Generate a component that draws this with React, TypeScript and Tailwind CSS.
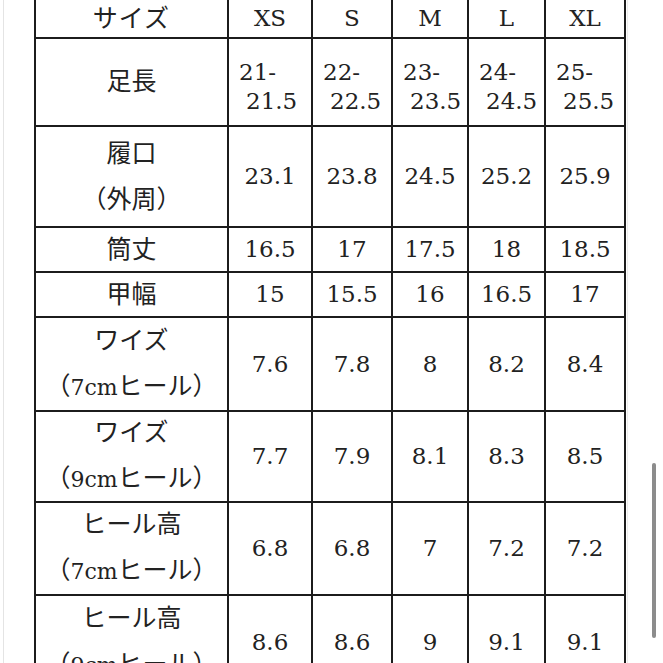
const serif = "font-['DejaVu_Serif','Noto_Sans_CJK_JP',serif]";

type Row = {
  label: string[];
  values: (string | [string, string])[];
};

const rows: Row[] = [
  { label: ["足長"], values: [["21-", "21.5"], ["22-", "22.5"], ["23-", "23.5"], ["24-", "24.5"], ["25-", "25.5"]] },
  { label: ["履口", "（外周）"], values: ["23.1", "23.8", "24.5", "25.2", "25.9"] },
  { label: ["筒丈"], values: ["16.5", "17", "17.5", "18", "18.5"] },
  { label: ["甲幅"], values: ["15", "15.5", "16", "16.5", "17"] },
  { label: ["ワイズ", "（7cmヒール）"], values: ["7.6", "7.8", "8", "8.2", "8.4"] },
  { label: ["ワイズ", "（9cmヒール）"], values: ["7.7", "7.9", "8.1", "8.3", "8.5"] },
  { label: ["ヒール高", "（7cmヒール）"], values: ["6.8", "6.8", "7", "7.2", "7.2"] },
  { label: ["ヒール高", "（9cmヒール）"], values: ["8.6", "8.6", "9", "9.1", "9.1"] },
];

// "（7cmヒール）" -> keep the latin part a bit smaller, like the original
function Label({ text }: { text: string }) {
  const m = text.match(/^（(\d+cm)(.*)）$/);
  if (!m) return <span>{text}</span>;
  return (
    <span>
      （<span className="text-[22px]">{m[1]}</span>
      {m[2]}）
    </span>
  );
}

export default function App() {
  return (
    <div className={`relative w-[663px] h-[663px] overflow-hidden bg-white text-[#222] ${serif}`}>
      <div className="flex h-full">
        <div className="w-[3px]" />
        <div className="w-px bg-[#e4e4e4]" />
        <div className="w-[30px]" />

        <div className="grid w-fit grid-cols-[191px_82px_78px_74px_75px_78px] grid-rows-[37px_86px_99px_43px_43px_92px_89px_91px_92px] gap-[2px] bg-[#1c1c1c] px-[2px] pb-[2px] self-start">
          {/* header */}
          <div className="flex items-center justify-center bg-white text-[25px] tracking-[1px]">サイズ</div>
          {["XS", "S", "M", "L", "XL"].map((s) => (
            <div key={s} className="flex items-center justify-center bg-white text-[23px]">
              {s}
            </div>
          ))}

          {rows.map((row, i) => (
            <div key={i} className="contents">
              <div className="flex flex-col items-center justify-center bg-white text-[25px] leading-[46px]">
                {row.label.map((l, j) => (
                  <Label key={j} text={l} />
                ))}
              </div>
              {row.values.map((v, j) =>
                Array.isArray(v) ? (
                  <div key={j} className="flex flex-col justify-center bg-white pl-[10px] pt-[10px] text-[23px] leading-[29px]">
                    <span>{v[0]}</span>
                    <span className="pl-[7px]">{v[1]}</span>
                  </div>
                ) : (
                  <div key={j} className="flex items-center justify-center bg-white text-[23px]">
                    {v}
                  </div>
                )
              )}
            </div>
          ))}
        </div>

        <div className="ml-px w-px bg-[#ececec]" />
      </div>

      {/* scrollbar thumb */}
      <div className="absolute right-[7px] top-[463px] h-[175px] w-[4px] rounded-full bg-[#8c8c8c]" />
    </div>
  );
}
